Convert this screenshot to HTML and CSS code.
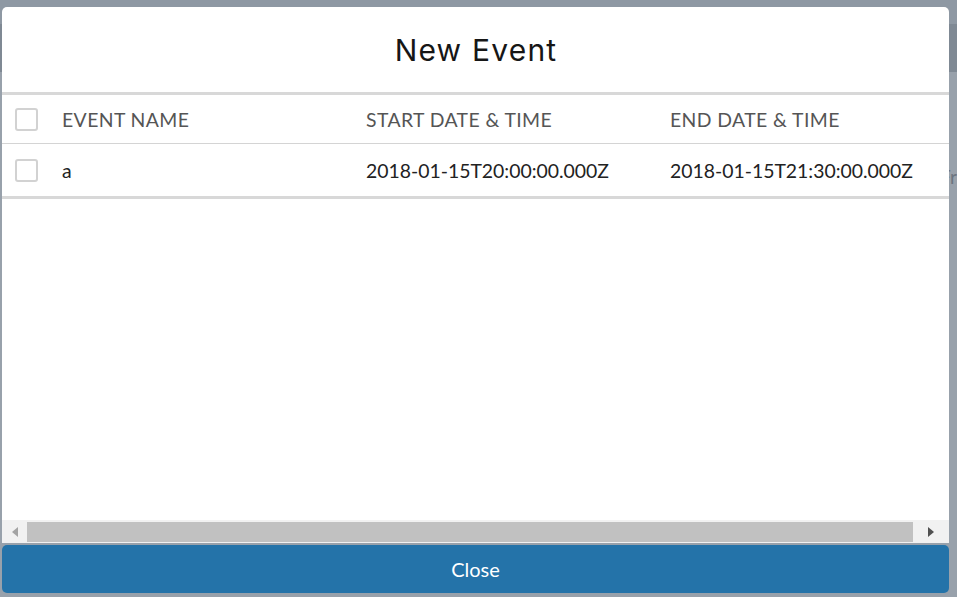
FILE: index.html
```html
<!DOCTYPE html>
<html>
<head>
<meta charset="utf-8">
<link rel="stylesheet" href="styles.css">
</head>
<body>
<span class="backdrop-text">Fr</span>
<div class="modal">
  <div class="modal-header">
    <h2 class="modal-title">New Event</h2>
  </div>
  <div class="modal-body">
    <table class="events">
      <colgroup>
        <col class="col-check">
        <col class="col-text">
        <col class="col-text">
        <col class="col-text">
        <col class="col-text">
      </colgroup>
      <thead>
        <tr>
          <th class="cell-check"><span class="checkbox"></span></th>
          <th>EVENT NAME</th>
          <th>START DATE &amp; TIME</th>
          <th>END DATE &amp; TIME</th>
          <th></th>
        </tr>
      </thead>
      <tbody>
        <tr>
          <td class="cell-check"><span class="checkbox"></span></td>
          <td>a</td>
          <td>2018-01-15T20:00:00.000Z</td>
          <td>2018-01-15T21:30:00.000Z</td>
          <td></td>
        </tr>
      </tbody>
    </table>
  </div>
  <div class="hscroll">
    <div class="arrow arrow-left"></div>
    <div class="track"><div class="thumb"></div></div>
    <div class="arrow arrow-right"></div>
  </div>
  <button class="close-btn">Close</button>
</div>
</body>
</html>
```
FILE: styles.css
```css
html, body {
  margin: 0;
  padding: 0;
}
body {
  width: 957px;
  height: 597px;
  overflow: hidden;
  position: relative;
  font-family: "Lato", "Open Sans", sans-serif;
  background:
    linear-gradient(to bottom, #8e98a3 0, #8e98a3 24px, #7f8994 24px, #7f8994 72px, #98a1ab 72px, #98a1ab 100%);
}
.backdrop-text {
  position: absolute;
  left: 940px;
  top: 165px;
  font-size: 19px;
  color: #6b7580;
  z-index: 0;
}
.modal {
  position: relative;
  z-index: 1;
  margin: 7px 0 0 2px;
  width: 947px;
  display: flex;
  flex-direction: column;
}
.modal-header {
  background: #fff;
  border-radius: 5px 5px 0 0;
  height: 85px;
  border-bottom: 3px solid #d8d8d8;
  display: flex;
  align-items: center;
  justify-content: center;
}
.modal-title {
  margin: 0 0 0 1px;
  font-family: "Inter", "Open Sans", sans-serif;
  font-weight: 400;
  font-size: 30px;
  color: #161616;
  letter-spacing: 1.2px;
}
.modal-body {
  background: #fff;
  height: 425px;
  overflow: hidden;
}
.events {
  border-collapse: collapse;
  table-layout: fixed;
  width: 1264px;
}
.col-check { width: 48px; }
.col-text { width: 304px; }
.events th,
.events td {
  text-align: left;
  padding: 0 0 0 12px;
  white-space: nowrap;
  font-size: 19.4px;
}
.events th {
  height: 48px;
  font-weight: 400;
  color: #555;
  letter-spacing: 0.4px;
  border-bottom: 1px solid #d4d4d4;
}
.events td {
  height: 52px;
  color: #222;
  border-bottom: 3px solid #d8d8d8;
}
.events .cell-check {
  padding-left: 13px;
}
.checkbox {
  display: block;
  width: 19px;
  height: 19px;
  border: 2px solid #d2d2d2;
  border-radius: 3px;
  background: #fff;
}
.hscroll {
  height: 23px;
  background: #f1f1f1;
  display: flex;
  align-items: center;
}
.arrow {
  width: 25px;
  height: 23px;
  display: flex;
  align-items: center;
  justify-content: center;
}
.arrow-left::before {
  content: "";
  border-style: solid;
  border-width: 5px 6px 5px 0;
  border-color: transparent #a3a3a3 transparent transparent;
}
.arrow-right {
  width: 36px;
}
.arrow-right::before {
  content: "";
  border-style: solid;
  border-width: 5px 0 5px 6px;
  border-color: transparent transparent transparent #505050;
}
.track {
  flex: 1;
  height: 23px;
  display: flex;
  align-items: center;
}
.thumb {
  width: 100%;
  height: 20px;
  margin-top: 1px;
  background: #c1c1c1;
}
.close-btn {
  margin-top: 2px;
  height: 48px;
  width: 947px;
  border: none;
  border-radius: 5px;
  background: #2473a9;
  color: #fff;
  font-family: "Lato", sans-serif;
  font-size: 20px;
  padding: 0;
  cursor: pointer;
}
```
